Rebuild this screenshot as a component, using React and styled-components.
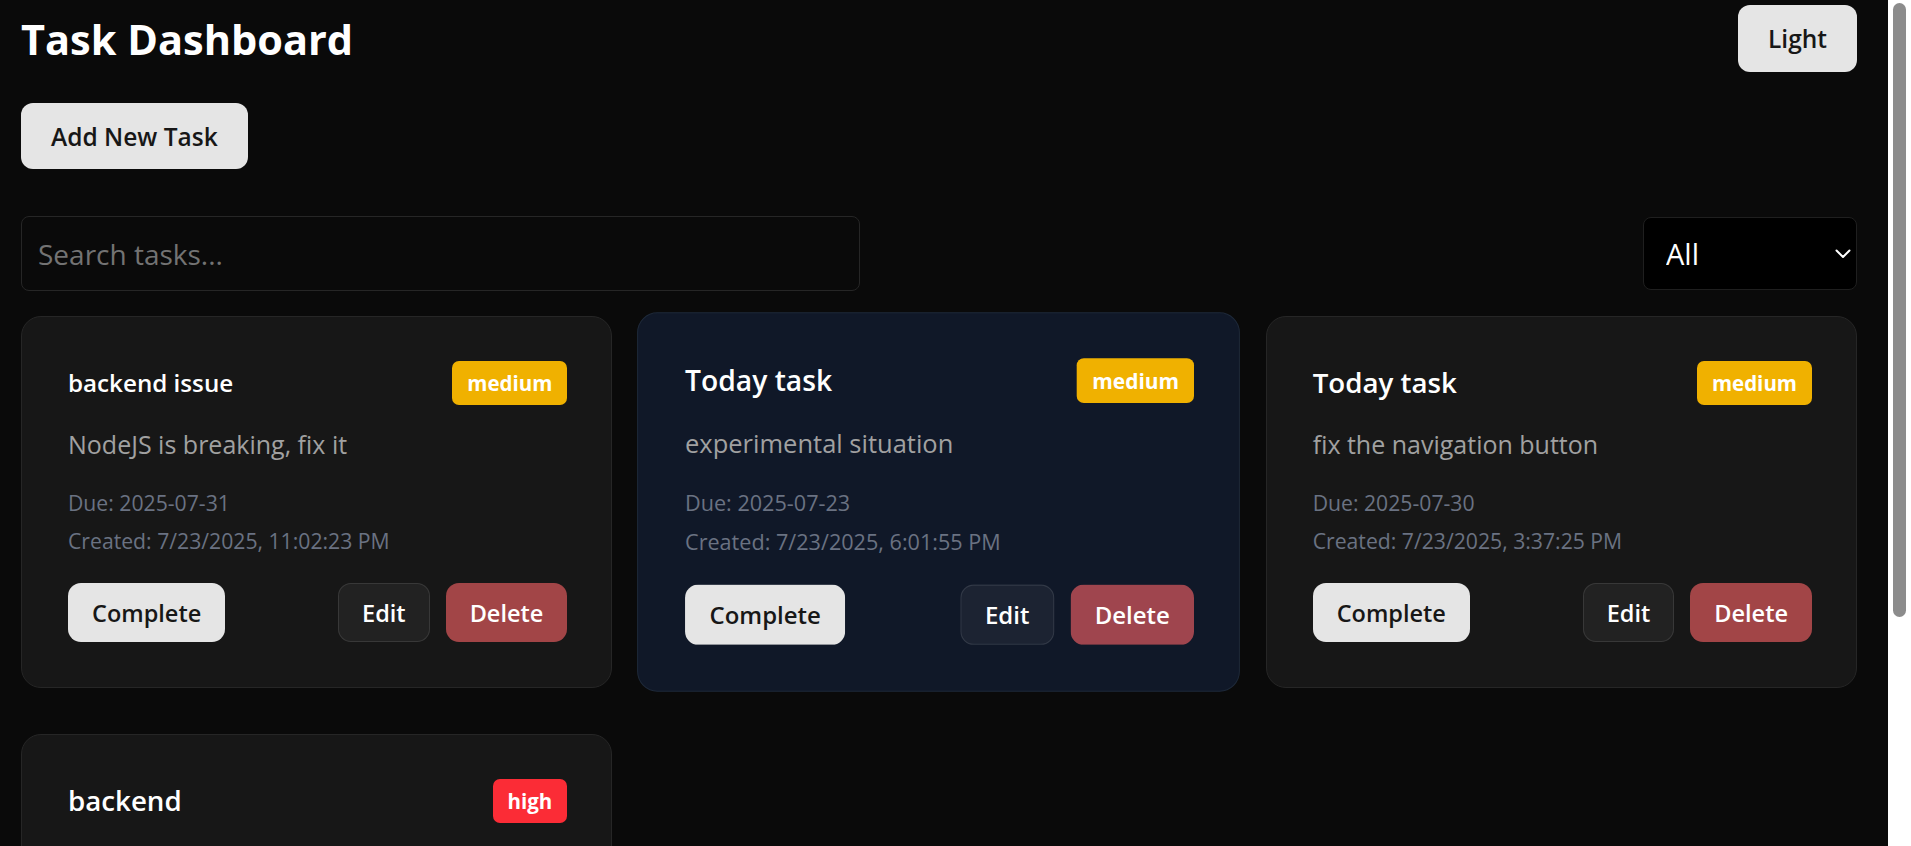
import React from 'react';
import styled, { createGlobalStyle, css } from 'styled-components';

const GlobalStyle = createGlobalStyle`
  * { box-sizing: border-box; }
  html, body { margin: 0; padding: 0; background: #0a0a0a; }
  body {
    color: #ffffff;
    font-family: "Open Sans", "Noto Sans", sans-serif;
  }
  ::-webkit-scrollbar { width: 0; height: 0; }
`;

const Page = styled.div`
  padding: 5px 54px 58px 21px;
`;

const ScrollTrack = styled.div`
  position: fixed;
  top: 0;
  right: 0;
  bottom: 0;
  width: 23px;
  background: #ffffff;
  z-index: 10;
`;

const ScrollThumb = styled.div`
  position: absolute;
  top: 3px;
  left: 5px;
  width: 13px;
  height: 614px;
  border-radius: 7px;
  background: #8c8c8c;
`;

const Header = styled.header`
  display: flex;
  justify-content: space-between;
  align-items: center;
  height: 67px;
`;

const Title = styled.h1`
  margin: 0;
  padding-top: 3px;
  font-size: 41.5px;
  line-height: 1;
  font-weight: 700;
  color: #ffffff;
`;

const LightButton = styled.button`
  height: 67px;
  padding: 0 30px;
  border: none;
  border-radius: 12px;
  background: #e5e5e5;
  color: #171717;
  font-family: inherit;
  font-size: 24.5px;
  font-weight: 600;
  cursor: pointer;
`;

const AddButton = styled(LightButton)`
  display: block;
  height: 66px;
  margin-top: 31px;
`;

const Controls = styled.div`
  display: flex;
  justify-content: space-between;
  align-items: center;
  margin-top: 47px;
`;

const SearchInput = styled.input`
  width: 839px;
  height: 75px;
  padding: 0 16px;
  background: #0a0a0a;
  border: 1px solid #262626;
  border-radius: 8px;
  color: #ffffff;
  font-family: inherit;
  font-size: 28px;
  outline: none;
  &::placeholder { color: #737373; }
`;

const SelectWrap = styled.div`
  position: relative;
  width: 214px;
  height: 73px;
`;

const Select = styled.select`
  appearance: none;
  width: 100%;
  height: 100%;
  padding: 0 40px 0 22px;
  background: #000000;
  border: 1px solid #1f1f1f;
  border-radius: 8px;
  color: #ffffff;
  font-family: inherit;
  font-size: 29px;
  outline: none;
`;

const Chevron = styled.svg`
  position: absolute;
  right: 6px;
  top: 32px;
  width: 16px;
  height: 10px;
  pointer-events: none;
`;

const Grid = styled.div`
  display: grid;
  grid-template-columns: repeat(3, 1fr);
  column-gap: 31px;
  row-gap: 46px;
  margin-top: 25px;
`;

const Card = styled.div`
  background: #171717;
  border: 1px solid #262626;
  border-radius: 20px;
  padding: 44px 44px 45px 46px;
  ${p => p.$active && css`
    background: #101828;
    border-color: #1e2939;
    transform: scale(1.02);
  `}
`;

const CardHead = styled.div`
  display: flex;
  justify-content: space-between;
  align-items: center;
  height: 44px;
`;

const CardTitle = styled.h3`
  margin: 0;
  font-size: ${p => (p.$small ? '24.2px' : '27.7px')};
  font-weight: 600;
  color: #ffffff;
  line-height: 1.2;
`;

const Badge = styled.span`
  display: inline-flex;
  align-items: center;
  height: 44px;
  padding: 0 15px;
  border-radius: 7px;
  background: ${p => (p.$level === 'high' ? '#fb2c36' : '#f0b100')};
  color: #ffffff;
  font-size: 20.5px;
  font-weight: 700;
`;

const Description = styled.p`
  margin: 23px 0 0;
  font-size: 25px;
  line-height: 32px;
  color: #a1a1a1;
`;

const Meta = styled.p`
  margin: ${p => (p.$first ? '28px' : '8px')} 0 0;
  font-size: 21.2px;
  line-height: 30px;
  color: #6a7282;
`;

const Actions = styled.div`
  display: flex;
  justify-content: space-between;
  align-items: center;
  margin-top: 27px;
`;

const ActionGroup = styled.div`
  display: flex;
  gap: 16px;
`;

const ActionButton = styled.button`
  height: 59px;
  padding: 0 23px;
  border-radius: 13px;
  font-family: inherit;
  font-size: 23.5px;
  font-weight: 600;
  cursor: pointer;
  border: 1px solid transparent;
  ${p => p.$variant === 'complete' && css`
    background: #e5e5e5;
    color: #171717;
  `}
  ${p => p.$variant === 'edit' && css`
    background: rgba(255, 255, 255, 0.05);
    border-color: rgba(255, 255, 255, 0.1);
    color: #ffffff;
  `}
  ${p => p.$variant === 'delete' && css`
    background: rgba(255, 100, 103, 0.6);
    color: #ffffff;
  `}
`;

const tasks = [
  {
    title: 'backend issue',
    small: true,
    priority: 'medium',
    description: 'NodeJS is breaking, fix it',
    due: '2025-07-31',
    created: '7/23/2025, 11:02:23 PM',
  },
  {
    title: 'Today task',
    priority: 'medium',
    description: 'experimental situation',
    due: '2025-07-23',
    created: '7/23/2025, 6:01:55 PM',
    active: true,
  },
  {
    title: 'Today task',
    priority: 'medium',
    description: 'fix the navigation button',
    due: '2025-07-30',
    created: '7/23/2025, 3:37:25 PM',
  },
  {
    title: 'backend',
    priority: 'high',
    description: 'API endpoints returning errors',
    due: '2025-07-25',
    created: '7/23/2025, 2:15:10 PM',
  },
];

function TaskCard({ task }) {
  return (
    <Card $active={task.active}>
      <CardHead>
        <CardTitle $small={task.small}>{task.title}</CardTitle>
        <Badge $level={task.priority}>{task.priority}</Badge>
      </CardHead>
      <Description>{task.description}</Description>
      <Meta $first>Due: {task.due}</Meta>
      <Meta>Created: {task.created}</Meta>
      <Actions>
        <ActionButton $variant="complete">Complete</ActionButton>
        <ActionGroup>
          <ActionButton $variant="edit">Edit</ActionButton>
          <ActionButton $variant="delete">Delete</ActionButton>
        </ActionGroup>
      </Actions>
    </Card>
  );
}

export default function App() {
  return (
    <>
      <GlobalStyle />
      <Page>
        <Header>
          <Title>Task Dashboard</Title>
          <LightButton>Light</LightButton>
        </Header>
        <AddButton>Add New Task</AddButton>
        <Controls>
          <SearchInput placeholder="Search tasks..." />
          <SelectWrap>
            <Select defaultValue="All">
              <option>All</option>
              <option>Low</option>
              <option>Medium</option>
              <option>High</option>
            </Select>
            <Chevron viewBox="0 0 16 10" fill="none">
              <path d="M1.5 1.5 L8 8 L14.5 1.5" stroke="#ffffff" strokeWidth="2" strokeLinecap="round" strokeLinejoin="round" />
            </Chevron>
          </SelectWrap>
        </Controls>
        <Grid>
          {tasks.map((t, i) => (
            <TaskCard key={i} task={t} />
          ))}
        </Grid>
      </Page>
      <ScrollTrack>
        <ScrollThumb />
      </ScrollTrack>
    </>
  );
}
